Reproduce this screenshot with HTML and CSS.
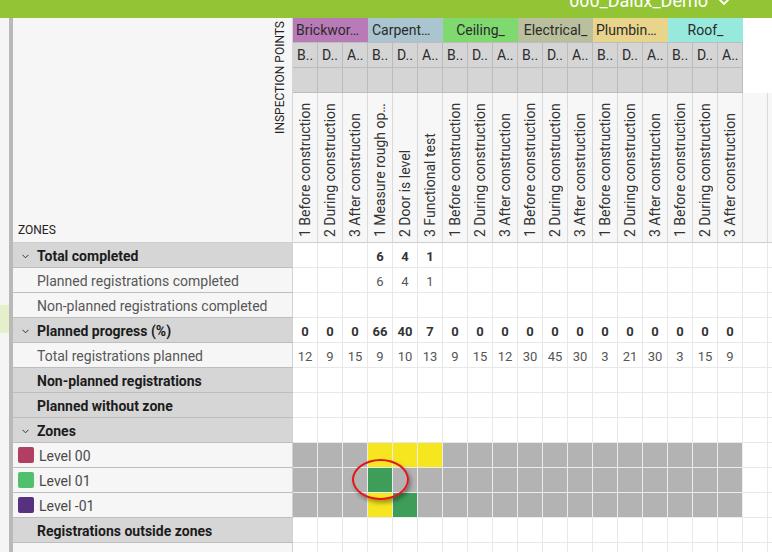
FILE: index.html
```html
<!DOCTYPE html>
<html>
<head>
<meta charset="utf-8">
<link rel="stylesheet" href="styles.css">
</head>
<body>
<div class="topbar">
  <span class="project">000_Dalux_Demo</span>
  <svg class="chev-top" width="14" height="9" viewBox="0 0 14 9"><polyline points="1.5,1.5 7,7 12.5,1.5" fill="none" stroke="#fff" stroke-width="1.8"/></svg>
</div>
<div class="main">
  <div class="edge"><div class="edge-mark"></div></div>
  <div class="rail"></div>
  <div class="sheet">
    <div class="grid">
      <div class="lhead">
        <span class="zones">ZONES</span>
        <span class="ipoints">INSPECTION POINTS</span>
      </div>
      <!-- row 1: categories -->
      <div class="cat brick">Brickwor…</div>
      <div class="cat carp">Carpent…</div>
      <div class="cat ceil">Ceiling_</div>
      <div class="cat elec">Electrical_</div>
      <div class="cat plumb">Plumbin…</div>
      <div class="cat roof">Roof_</div>
      <div class="blank"></div><div class="blank"></div>
      <!-- row 2 -->
      <div class="hs">B..</div><div class="hs">D..</div><div class="hs">A..</div>
      <div class="hs">B..</div><div class="hs">D..</div><div class="hs">A..</div>
      <div class="hs">B..</div><div class="hs">D..</div><div class="hs">A..</div>
      <div class="hs">B..</div><div class="hs">D..</div><div class="hs">A..</div>
      <div class="hs">B..</div><div class="hs">D..</div><div class="hs">A..</div>
      <div class="hs">B..</div><div class="hs">D..</div><div class="hs">A..</div>
      <div class="blank"></div><div class="blank"></div>
      <!-- row 3 -->
      <div class="hs"></div><div class="hs"></div><div class="hs"></div>
      <div class="hs"></div><div class="hs"></div><div class="hs"></div>
      <div class="hs"></div><div class="hs"></div><div class="hs"></div>
      <div class="hs"></div><div class="hs"></div><div class="hs"></div>
      <div class="hs"></div><div class="hs"></div><div class="hs"></div>
      <div class="hs"></div><div class="hs"></div><div class="hs"></div>
      <div class="blank"></div><div class="blank"></div>
      <!-- row 4: rotated labels -->
      <div class="rot"><span>1 Before construction</span></div>
      <div class="rot"><span>2 During construction</span></div>
      <div class="rot"><span>3 After construction</span></div>
      <div class="rot"><span>1 Measure rough op…</span></div>
      <div class="rot"><span>2 Door is level</span></div>
      <div class="rot"><span>3 Functional test</span></div>
      <div class="rot"><span>1 Before construction</span></div>
      <div class="rot"><span>2 During construction</span></div>
      <div class="rot"><span>3 After construction</span></div>
      <div class="rot"><span>1 Before construction</span></div>
      <div class="rot"><span>2 During construction</span></div>
      <div class="rot"><span>3 After construction</span></div>
      <div class="rot"><span>1 Before construction</span></div>
      <div class="rot"><span>2 During construction</span></div>
      <div class="rot"><span>3 After construction</span></div>
      <div class="rot"><span>1 Before construction</span></div>
      <div class="rot"><span>2 During construction</span></div>
      <div class="rot"><span>3 After construction</span></div>
      <div class="rot"></div><div class="rot"></div>

      <!-- Total completed -->
      <div class="lc g chev"><svg class="chv" width="7" height="5" viewBox="0 0 7 5"><polyline points="0.5,0.8 3.5,3.8 6.5,0.8" fill="none" stroke="#333" stroke-width="1"/></svg>Total completed</div>
      <div class="c"></div><div class="c"></div><div class="c"></div>
      <div class="c b">6</div><div class="c b">4</div><div class="c b">1</div>
      <div class="c"></div><div class="c"></div><div class="c"></div><div class="c"></div><div class="c"></div><div class="c"></div>
      <div class="c"></div><div class="c"></div><div class="c"></div><div class="c"></div><div class="c"></div><div class="c"></div>
      <div class="c"></div><div class="c"></div>

      <!-- Planned registrations completed -->
      <div class="lc">Planned registrations completed</div>
      <div class="c"></div><div class="c"></div><div class="c"></div>
      <div class="c">6</div><div class="c">4</div><div class="c">1</div>
      <div class="c"></div><div class="c"></div><div class="c"></div><div class="c"></div><div class="c"></div><div class="c"></div>
      <div class="c"></div><div class="c"></div><div class="c"></div><div class="c"></div><div class="c"></div><div class="c"></div>
      <div class="c"></div><div class="c"></div>

      <!-- Non-planned registrations completed -->
      <div class="lc">Non-planned registrations completed</div>
      <div class="c"></div><div class="c"></div><div class="c"></div><div class="c"></div><div class="c"></div><div class="c"></div>
      <div class="c"></div><div class="c"></div><div class="c"></div><div class="c"></div><div class="c"></div><div class="c"></div>
      <div class="c"></div><div class="c"></div><div class="c"></div><div class="c"></div><div class="c"></div><div class="c"></div>
      <div class="c"></div><div class="c"></div>

      <!-- Planned progress -->
      <div class="lc g chev"><svg class="chv" width="7" height="5" viewBox="0 0 7 5"><polyline points="0.5,0.8 3.5,3.8 6.5,0.8" fill="none" stroke="#333" stroke-width="1"/></svg>Planned progress (%)</div>
      <div class="c b">0</div><div class="c b">0</div><div class="c b">0</div>
      <div class="c b">66</div><div class="c b">40</div><div class="c b">7</div>
      <div class="c b">0</div><div class="c b">0</div><div class="c b">0</div>
      <div class="c b">0</div><div class="c b">0</div><div class="c b">0</div>
      <div class="c b">0</div><div class="c b">0</div><div class="c b">0</div>
      <div class="c b">0</div><div class="c b">0</div><div class="c b">0</div>
      <div class="c"></div><div class="c"></div>

      <!-- Total registrations planned -->
      <div class="lc">Total registrations planned</div>
      <div class="c">12</div><div class="c">9</div><div class="c">15</div>
      <div class="c">9</div><div class="c">10</div><div class="c">13</div>
      <div class="c">9</div><div class="c">15</div><div class="c">12</div>
      <div class="c">30</div><div class="c">45</div><div class="c">30</div>
      <div class="c">3</div><div class="c">21</div><div class="c">30</div>
      <div class="c">3</div><div class="c">15</div><div class="c">9</div>
      <div class="c"></div><div class="c"></div>

      <!-- Non-planned registrations -->
      <div class="lc g">Non-planned registrations</div>
      <div class="c"></div><div class="c"></div><div class="c"></div><div class="c"></div><div class="c"></div><div class="c"></div>
      <div class="c"></div><div class="c"></div><div class="c"></div><div class="c"></div><div class="c"></div><div class="c"></div>
      <div class="c"></div><div class="c"></div><div class="c"></div><div class="c"></div><div class="c"></div><div class="c"></div>
      <div class="c"></div><div class="c"></div>

      <!-- Planned without zone -->
      <div class="lc g">Planned without zone</div>
      <div class="c"></div><div class="c"></div><div class="c"></div><div class="c"></div><div class="c"></div><div class="c"></div>
      <div class="c"></div><div class="c"></div><div class="c"></div><div class="c"></div><div class="c"></div><div class="c"></div>
      <div class="c"></div><div class="c"></div><div class="c"></div><div class="c"></div><div class="c"></div><div class="c"></div>
      <div class="c"></div><div class="c"></div>

      <!-- Zones -->
      <div class="lc g chev"><svg class="chv" width="7" height="5" viewBox="0 0 7 5"><polyline points="0.5,0.8 3.5,3.8 6.5,0.8" fill="none" stroke="#333" stroke-width="1"/></svg>Zones</div>
      <div class="c"></div><div class="c"></div><div class="c"></div><div class="c"></div><div class="c"></div><div class="c"></div>
      <div class="c"></div><div class="c"></div><div class="c"></div><div class="c"></div><div class="c"></div><div class="c"></div>
      <div class="c"></div><div class="c"></div><div class="c"></div><div class="c"></div><div class="c"></div><div class="c"></div>
      <div class="c"></div><div class="c"></div>

      <!-- Level 00 -->
      <div class="lc lvl"><span class="sq l00"></span><span class="lt">Level 00</span></div>
      <div class="c z"></div><div class="c z"></div><div class="c z"></div>
      <div class="c z y"></div><div class="c z y"></div><div class="c z y"></div>
      <div class="c z"></div><div class="c z"></div><div class="c z"></div><div class="c z"></div><div class="c z"></div><div class="c z"></div>
      <div class="c z"></div><div class="c z"></div><div class="c z"></div><div class="c z"></div><div class="c z"></div><div class="c z"></div>
      <div class="c"></div><div class="c"></div>

      <!-- Level 01 -->
      <div class="lc lvl"><span class="sq l01"></span><span class="lt">Level 01</span></div>
      <div class="c z"></div><div class="c z"></div><div class="c z"></div>
      <div class="c z gr"></div><div class="c z"></div><div class="c z"></div>
      <div class="c z"></div><div class="c z"></div><div class="c z"></div><div class="c z"></div><div class="c z"></div><div class="c z"></div>
      <div class="c z"></div><div class="c z"></div><div class="c z"></div><div class="c z"></div><div class="c z"></div><div class="c z"></div>
      <div class="c"></div><div class="c"></div>

      <!-- Level -01 -->
      <div class="lc lvl"><span class="sq lm1"></span><span class="lt">Level -01</span></div>
      <div class="c z"></div><div class="c z"></div><div class="c z"></div>
      <div class="c z y"></div><div class="c z gr"></div><div class="c z"></div>
      <div class="c z"></div><div class="c z"></div><div class="c z"></div><div class="c z"></div><div class="c z"></div><div class="c z"></div>
      <div class="c z"></div><div class="c z"></div><div class="c z"></div><div class="c z"></div><div class="c z"></div><div class="c z"></div>
      <div class="c"></div><div class="c"></div>

      <!-- Registrations outside zones -->
      <div class="lc g">Registrations outside zones</div>
      <div class="c"></div><div class="c"></div><div class="c"></div><div class="c"></div><div class="c"></div><div class="c"></div>
      <div class="c"></div><div class="c"></div><div class="c"></div><div class="c"></div><div class="c"></div><div class="c"></div>
      <div class="c"></div><div class="c"></div><div class="c"></div><div class="c"></div><div class="c"></div><div class="c"></div>
      <div class="c"></div><div class="c"></div>

      <!-- next row (partially visible) -->
      <div class="lc"></div>
      <div class="c"></div><div class="c"></div><div class="c"></div><div class="c"></div><div class="c"></div><div class="c"></div>
      <div class="c"></div><div class="c"></div><div class="c"></div><div class="c"></div><div class="c"></div><div class="c"></div>
      <div class="c"></div><div class="c"></div><div class="c"></div><div class="c"></div><div class="c"></div><div class="c"></div>
      <div class="c"></div><div class="c"></div>
    </div>
  </div>
</div>
<div class="mark"></div>
</body>
</html>
```

FILE: styles.css
```css
* { box-sizing: border-box; }
html, body { margin: 0; padding: 0; }
body {
  font-family: Roboto, "Liberation Sans", sans-serif;
  background: #f5f5f5;
  width: 772px;
  height: 552px;
  overflow: hidden;
  position: relative;
}
.topbar {
  height: 18px;
  background: #93c435;
  display: flex;
  justify-content: flex-end;
  align-items: flex-start;
  overflow: hidden;
  padding-right: 41px;
  color: #fff;
}
.project {
  font-size: 18px;
  line-height: 18px;
  margin-top: -8px;
}
.chev-top { margin-left: 9px; margin-top: -3px; }

.main { display: flex; height: 534px; }
.edge { width: 9px; background: #f5f5f5; padding-top: 287px; flex: none; }
.edge-mark { height: 28px; background: #e4f0cc; }
.rail { width: 4px; background: #b9b9b9; flex: none; }
.sheet { flex: 1; overflow: hidden; background: #fff; }

.grid {
  display: grid;
  grid-template-columns: 280px repeat(20, 25px);
  grid-template-rows: repeat(3, 25px) 150px repeat(13, 25px);
  width: 780px;
}

.lhead {
  grid-row: 1 / 5;
  grid-column: 1;
  background: #f6f6f6;
  border-right: 1px solid #d6d6d6;
  border-bottom: 1px solid #cfcfcf;
  display: flex;
  justify-content: space-between;
  padding: 0 5px 0 5px;
}
.zones {
  align-self: flex-end;
  font-size: 12px;
  line-height: 14px;
  color: #222;
  margin-bottom: 5px;
}
.ipoints {
  align-self: flex-start;
  writing-mode: vertical-rl;
  transform: rotate(180deg);
  font-size: 12px;
  line-height: 14px;
  color: #222;
  margin-top: 3px;
  white-space: nowrap;
}

.cat {
  grid-column: span 3;
  font-size: 14px;
  line-height: 24px;
  color: #2b2b2b;
  text-align: center;
  white-space: nowrap;
  overflow: hidden;
  padding: 0 4px;
  border-bottom: 1px solid #bdbdbd;
}
.brick { background: #b97bb7; text-align: left; padding-left: 3px; }
.carp { background: #aac5d0; text-align: left; padding-left: 4px; }
.ceil { background: #7fd96f; }
.elec { background: #babf9d; }
.plumb { background: #e9d48b; text-align: left; padding-left: 3px; }
.roof { background: #97e8dd; }

.blank { background: #fff; }

.hs {
  background: #d5d5d5;
  border-right: 1px solid #bcbcbc;
  border-bottom: 1px solid #bcbcbc;
  font-size: 14px;
  line-height: 24px;
  color: #2b2b2b;
  padding-left: 4px;
  white-space: nowrap;
  overflow: hidden;
}

.rot {
  background: #f7f7f7;
  border-right: 1px solid #dadada;
  border-bottom: 1px solid #cfcfcf;
  display: flex;
  justify-content: center;
  overflow: hidden;
}
.rot span {
  writing-mode: vertical-rl;
  transform: rotate(180deg);
  white-space: nowrap;
  overflow: hidden;
  font-size: 14px;
  line-height: 16px;
  color: #333;
  padding-top: 5px;
  padding-bottom: 8px;
}

.lc {
  background: #f6f6f6;
  border-right: 1px solid #d2d2d2;
  border-bottom: 1px solid #bdbdbd;
  display: flex;
  align-items: center;
  font-size: 14px;
  color: #575757;
  padding-left: 24px;
  padding-top: 2px;
  white-space: nowrap;
}
.lc.g {
  background: #d6d6d6;
  font-weight: 700;
  color: #1c1c1c;
}
.lc.chev { padding-left: 9px; }
.chv { margin-right: 8px; margin-top: 0; flex: none; }
.lc.lvl { padding-left: 5px; padding-top: 0; color: #4a4a4a; }
.lt { margin-top: 2px; }
.sq {
  width: 16px;
  height: 16px;
  border-radius: 2px;
  margin-right: 5px;
  flex: none;
}
.l00 { background: #b03f62; }
.l01 { background: #50c06d; }
.lm1 { background: #55317f; }

.c {
  background: #fff;
  border-right: 1px solid #e8e8e8;
  border-bottom: 1px solid #e8e8e8;
  display: flex;
  align-items: center;
  justify-content: center;
  font-size: 13px;
  color: #555;
  padding-top: 2px;
}
.c.b { font-weight: 700; color: #333; }
.c.z { background: #b3b3b3; border-color: #ececec; }
.c.y { background: #f5e61f; }
.c.gr { background: #3e9e59; }

.mark {
  position: absolute;
  left: 352px;
  top: 459px;
  width: 57px;
  height: 41px;
  border: 2px solid #e3161b;
  border-radius: 50%;
  box-shadow: 2px 3px 4px rgba(0, 0, 0, 0.35);
}
```
